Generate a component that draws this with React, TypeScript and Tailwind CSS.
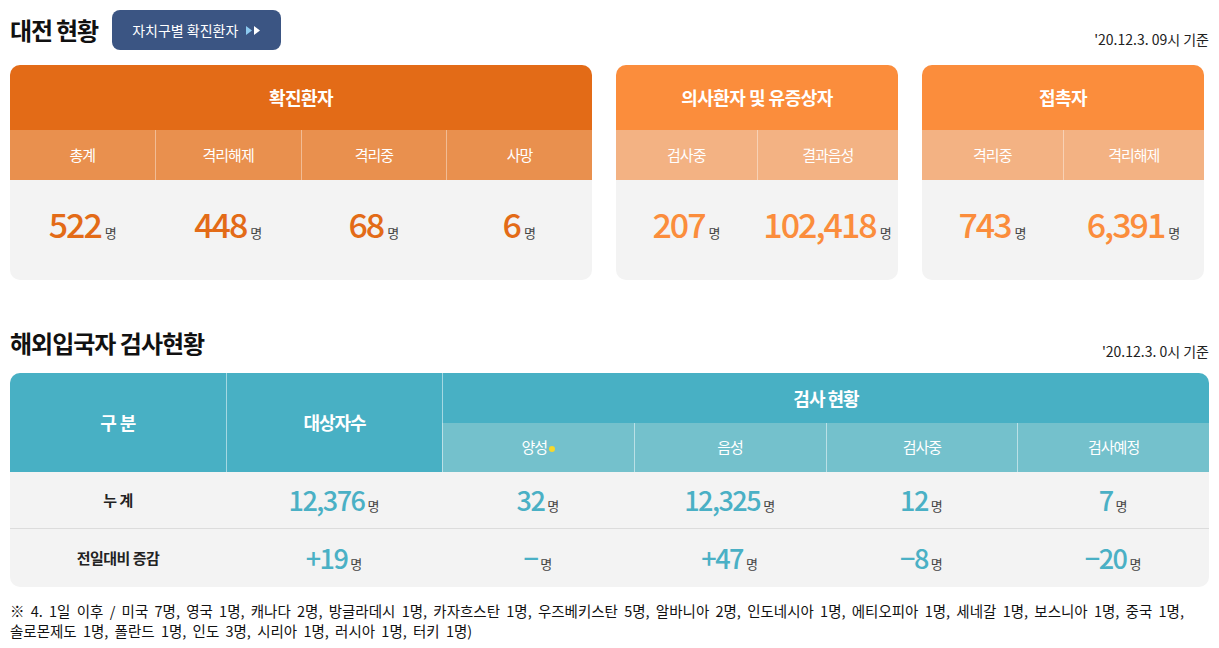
import React from 'react';

const FONT = '"Noto Sans CJK KR", "Noto Sans", sans-serif';

type Item = { label: string; value: string };

function StatCard({
  title, items, width, headClass, subClass, numClass,
}: {
  title: string;
  items: Item[];
  width: string;
  headClass: string;
  subClass: string;
  numClass: string;
}) {
  return (
    <div className={`${width} overflow-hidden rounded-[10px] bg-[#f3f3f3]`}>
      <div className={`${headClass} flex h-[65px] items-center justify-center text-[18px] font-bold tracking-[-0.5px] text-white`}>
        {title}
      </div>
      <div className={`${subClass} flex h-[50px]`}>
        {items.map((it, i) => (
          <div
            key={it.label}
            className={`flex flex-1 items-center justify-center text-[15px] tracking-[-1px] text-white ${i > 0 ? 'border-l border-white/40' : ''}`}
          >
            {it.label}
          </div>
        ))}
      </div>
      <div className="flex h-[100px]">
        {items.map((it) => (
          <div key={it.label} className="flex flex-1 items-baseline justify-center pt-[24px]">
            <span className={`${numClass} text-[34px] font-medium leading-[40px] tracking-[-2px]`}>{it.value}</span>
            <span className="ml-[4px] text-[13px] text-[#444]">명</span>
          </div>
        ))}
      </div>
    </div>
  );
}

function Num({ v }: { v: string }) {
  return (
    <div className="flex items-baseline justify-center">
      <span className="text-[27px] font-medium leading-[32px] tracking-[-1.5px] text-[#4ab0c5]">{v}</span>
      <span className="ml-[3px] text-[13px] text-[#444]">명</span>
    </div>
  );
}

export default function App() {
  const rows = [
    { label: '누 계', values: ['12,376', '32', '12,325', '12', '7'] },
    { label: '전일대비 증감', values: ['+19', '−', '+47', '−8', '−20'] },
  ];

  return (
    <div className="min-h-[648px] w-[1219px] bg-white px-[10px] pt-[10px] text-[#222]" style={{ fontFamily: FONT }}>
      {/* 대전 현황 */}
      <div className="flex h-[40px] items-center">
        <h1 className="text-[24px] font-bold leading-none tracking-[-1.2px] text-[#111]">대전 현황</h1>
        <button
          type="button"
          className="ml-[14px] flex h-[40px] w-[169px] items-center justify-center gap-[8px] rounded-[8px] bg-[#3b5583] text-[14px] text-white"
        >
          자치구별 확진환자
          <span className="flex items-center">
            <svg width="14" height="9" viewBox="0 0 14 9">
              <polygon points="0,0 6,4.5 0,9" fill="#8ccaf0" />
              <polygon points="8,0 14,4.5 8,9" fill="#ffffff" />
            </svg>
          </span>
        </button>
        <div className="ml-auto self-end text-[14px] text-[#222]">'20.12.3. 09시 기준</div>
      </div>

      <div className="mt-[15px] flex gap-[24px]">
        <StatCard
          title="확진환자"
          width="w-[582px]"
          headClass="bg-[#e36b17]"
          subClass="bg-[#e9904e]"
          numClass="text-[#e36b17]"
          items={[
            { label: '총계', value: '522' },
            { label: '격리해제', value: '448' },
            { label: '격리중', value: '68' },
            { label: '사망', value: '6' },
          ]}
        />
        <StatCard
          title="의사환자 및 유증상자"
          width="w-[282px]"
          headClass="bg-[#fb8d3c]"
          subClass="bg-[#f3b283]"
          numClass="text-[#fb8d3c]"
          items={[
            { label: '검사중', value: '207' },
            { label: '결과음성', value: '102,418' },
          ]}
        />
        <StatCard
          title="접촉자"
          width="w-[282px]"
          headClass="bg-[#fb8d3c]"
          subClass="bg-[#f3b283]"
          numClass="text-[#fb8d3c]"
          items={[
            { label: '격리중', value: '743' },
            { label: '격리해제', value: '6,391' },
          ]}
        />
      </div>

      {/* 해외입국자 검사현황 */}
      <div className="mt-[44px] flex h-[38px] items-center">
        <h2 className="text-[24px] font-bold leading-none tracking-[-1px] text-[#111]">해외입국자 검사현황</h2>
        <div className="ml-auto self-end text-[14px] text-[#222]">'20.12.3. 0시 기준</div>
      </div>

      <div className="mt-[11px] overflow-hidden rounded-[10px] bg-[#f3f3f3]">
        <div className="grid grid-cols-[216px_216px_repeat(4,1fr)] grid-rows-[50px_49px]">
          <div className="row-span-2 flex items-center justify-center bg-[#48b0c4] text-[18px] font-bold tracking-[-0.5px] text-white">
            구 분
          </div>
          <div className="row-span-2 flex items-center justify-center border-l border-white/50 bg-[#48b0c4] text-[18px] font-bold tracking-[-1px] text-white">
            대상자수
          </div>
          <div className="col-span-4 flex items-center justify-center border-l border-white/50 bg-[#48b0c4] text-[18px] font-bold tracking-[-1px] text-white">
            검사 현황
          </div>
          {['양성', '음성', '검사중', '검사예정'].map((l) => (
            <div
              key={l}
              className="flex items-center justify-center border-l border-white/50 bg-[#74c1cc] text-[15px] tracking-[-1px] text-white"
            >
              {l}
              {l === '양성' && <span className="ml-[2px] mt-[2px] h-[6px] w-[6px] rounded-full bg-[#f7d82a]" />}
            </div>
          ))}
        </div>
        {rows.map((r, i) => (
          <div
            key={r.label}
            className={`grid grid-cols-[216px_216px_repeat(4,1fr)] items-center ${i === 0 ? 'h-[57px] border-b border-[#dcdcdc]' : 'h-[58px]'}`}
          >
            <div className="text-center text-[15px] font-bold tracking-[-0.5px] text-[#222]">{r.label}</div>
            {r.values.map((v, j) => (
              <Num key={j} v={v} />
            ))}
          </div>
        ))}
      </div>

      <p className="mt-[14px] text-[14.5px] leading-[20px] text-[#111] [word-spacing:3px]">
        ※ 4. 1일 이후 / 미국 7명, 영국 1명, 캐나다 2명, 방글라데시 1명, 카자흐스탄 1명, 우즈베키스탄 5명, 알바니아 2명, 인도네시아 1명, 에티오피아 1명, 세네갈 1명, 보스니아 1명, 중국 1명,
        <br />
        솔로몬제도 1명, 폴란드 1명, 인도 3명, 시리아 1명, 러시아 1명, 터키 1명)
      </p>
    </div>
  );
}
